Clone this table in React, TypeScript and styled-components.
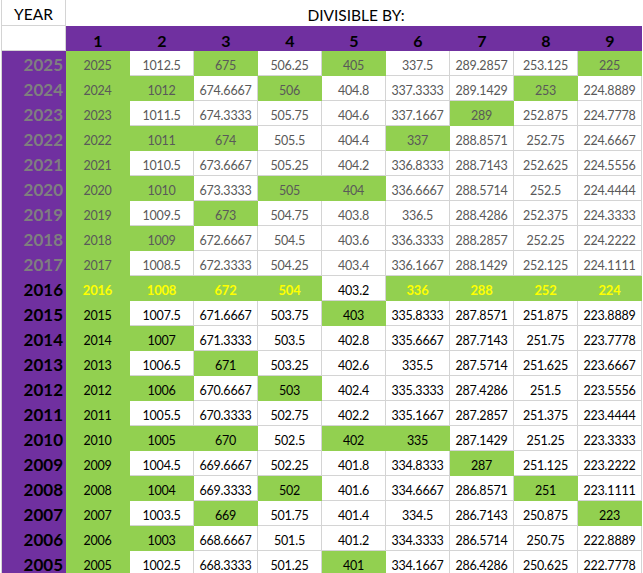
import styled, { createGlobalStyle } from "styled-components";

const GREEN = "#92d050";
const PURPLE = "#7030a0";
const GRID = "#d4d4d4";

const GlobalStyle = createGlobalStyle`
  body {
    margin: 0;
    background: #ffffff;
    font-family: Lato, "Liberation Sans", sans-serif;
  }
`;

const Sheet = styled.div`
  display: grid;
  grid-template-columns: repeat(10, 64px);
  grid-template-rows: 26px;
  grid-auto-rows: 25px;
  margin-left: 1px;
  border-left: 1px solid ${GRID};
  width: 641px;
  overflow: hidden;
`;

const TitleCell = styled.div`
  display: flex;
  align-items: center;
  justify-content: center;
  padding-top: 3px;
  font-size: 15.5px;
  color: #000;
  border-right: 1px solid ${GRID};
  border-bottom: 1px solid ${GRID};
`;

const MergedTitle = styled(TitleCell)`
  grid-column: span 9;
  border-right: none;
  border-bottom: none;
  padding-left: 4px;
`;

const Corner = styled.div`
  border-right: 1px solid ${GRID};
  border-bottom: 1px solid ${GRID};
`;

const HeaderCell = styled.div`
  display: flex;
  align-items: center;
  justify-content: center;
  padding-top: 3px;
  background: ${PURPLE};
  color: #000;
  font-size: 16px;
  font-weight: 700;
`;

const YearCell = styled.div<{ $muted: boolean }>`
  display: flex;
  align-items: center;
  justify-content: flex-end;
  padding: 2px 3px 0 0;
  background: ${PURPLE};
  color: ${(p) => (p.$muted ? "#7f7f7f" : "#000")};
  font-size: 17px;
  font-weight: 700;
`;

const ValueCell = styled.div<{ $hit: boolean; $muted: boolean; $lead: boolean }>`
  display: flex;
  align-items: center;
  justify-content: center;
  padding-top: 4px;
  font-size: ${(p) => (p.$lead && p.$hit ? "13px" : "12.5px")};
  letter-spacing: -0.2px;
  font-weight: ${(p) => (p.$lead && p.$hit ? 700 : 400)};
  background: ${(p) => (p.$hit ? GREEN : "#fff")};
  color: ${(p) =>
    p.$lead && p.$hit ? "#ffff00" : p.$muted ? "#595959" : "#000"};
  border-right: 1px solid ${(p) => (p.$hit ? GREEN : GRID)};
  border-bottom: 1px solid ${(p) => (p.$hit ? GREEN : GRID)};
`;

const divisors = [1, 2, 3, 4, 5, 6, 7, 8, 9];
const years = Array.from({ length: 21 }, (_, i) => 2025 - i);

const format = (v: number) => String(Math.round(v * 10000) / 10000);

export default function App() {
  return (
    <>
      <GlobalStyle />
      <Sheet>
        <TitleCell>YEAR</TitleCell>
        <MergedTitle>DIVISIBLE BY:</MergedTitle>
        <Corner />
        {divisors.map((d) => (
          <HeaderCell key={d}>{d}</HeaderCell>
        ))}
        {years.map((year) => (
          <Row key={year} year={year} />
        ))}
      </Sheet>
    </>
  );
}

function Row({ year }: { year: number }) {
  const muted = year > 2016;
  const lead = year === 2016;
  return (
    <>
      <YearCell $muted={muted}>{year}</YearCell>
      {divisors.map((d) => (
        <ValueCell
          key={d}
          $hit={year % d === 0}
          $muted={muted}
          $lead={lead}
        >
          {format(year / d)}
        </ValueCell>
      ))}
    </>
  );
}
